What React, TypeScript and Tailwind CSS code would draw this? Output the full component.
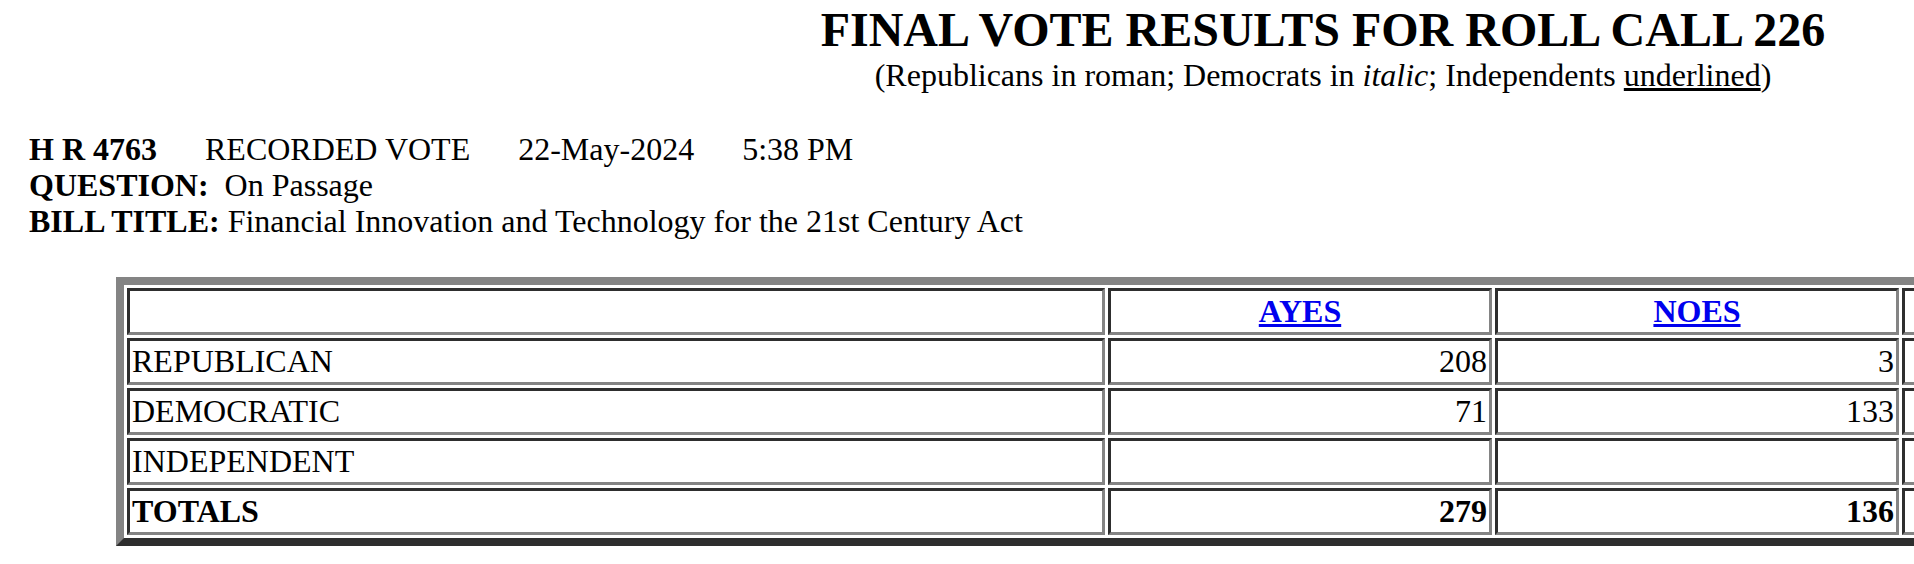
import React from 'react'

type PartyRow = {
  label: string
  ayes: string
  noes: string
  bold?: boolean
}

const ROWS: PartyRow[] = [
  { label: 'REPUBLICAN', ayes: '208', noes: '3' },
  { label: 'DEMOCRATIC', ayes: '71', noes: '133' },
  { label: 'INDEPENDENT', ayes: '', noes: '' },
  { label: 'TOTALS', ayes: '279', noes: '136', bold: true },
]

const GAP = '\u00a0'.repeat(6)

// inset look of each table cell
const cellBase =
  'h-[47px] flex items-center px-[2px] border-[3px] border-t-[#2e2e2e] border-l-[#2e2e2e] border-b-[#848484] border-r-[#848484]'

function Cell({ children, className = '' }: { children?: React.ReactNode; className?: string }) {
  return <div className={`${cellBase} ${className}`}>{children}</div>
}

export default function App() {
  return (
    <div
      className="w-[1914px] h-[564px] overflow-hidden bg-white text-black"
      style={{ fontFamily: '"Liberation Serif", "Times New Roman", serif' }}
    >
      <div className="w-[2646px]">
        <h2 className="mt-[2px] text-center text-[48px] font-bold leading-[55px]">
          FINAL VOTE RESULTS FOR ROLL CALL 226
        </h2>
        <div className="text-center text-[32px] leading-[36px]">
          (Republicans in roman; Democrats in <i>italic</i>; Independents <u>underlined</u>)
        </div>

        {/* vote header */}
        <div className="mt-[38px] pl-[29px] text-[32px] leading-[36px]">
          <div>
            <b>H R 4763</b>
            {GAP}RECORDED VOTE{GAP}22-May-2024{GAP}5:38 PM
          </div>
          <div>
            <b>QUESTION:</b>
            {'\u00a0\u00a0'}On Passage
          </div>
          <div>
            <b>BILL TITLE:</b> Financial Innovation and Technology for the 21st Century Act
          </div>
        </div>

        {/* totals table */}
        <div className="mt-[38px] ml-[116px] w-fit border-[8px] border-t-[#848484] border-l-[#848484] border-b-[#2e2e2e] border-r-[#2e2e2e]">
          <div className="grid grid-cols-[978px_384px_404px_420px_420px] gap-[3px] p-[3px] text-[32px] leading-[37px]">
            <Cell />
            <Cell className="justify-center font-bold">
              <a href="#" className="text-[#0000ee] underline">AYES</a>
            </Cell>
            <Cell className="justify-center font-bold">
              <a href="#" className="text-[#0000ee] underline">NOES</a>
            </Cell>
            <Cell />
            <Cell />
            {ROWS.map((row) => (
              <React.Fragment key={row.label}>
                <Cell className={row.bold ? 'font-bold' : ''}>{row.label}</Cell>
                <Cell className={`justify-end ${row.bold ? 'font-bold' : ''}`}>{row.ayes}</Cell>
                <Cell className={`justify-end ${row.bold ? 'font-bold' : ''}`}>{row.noes}</Cell>
                <Cell />
                <Cell />
              </React.Fragment>
            ))}
          </div>
        </div>
      </div>
    </div>
  )
}
